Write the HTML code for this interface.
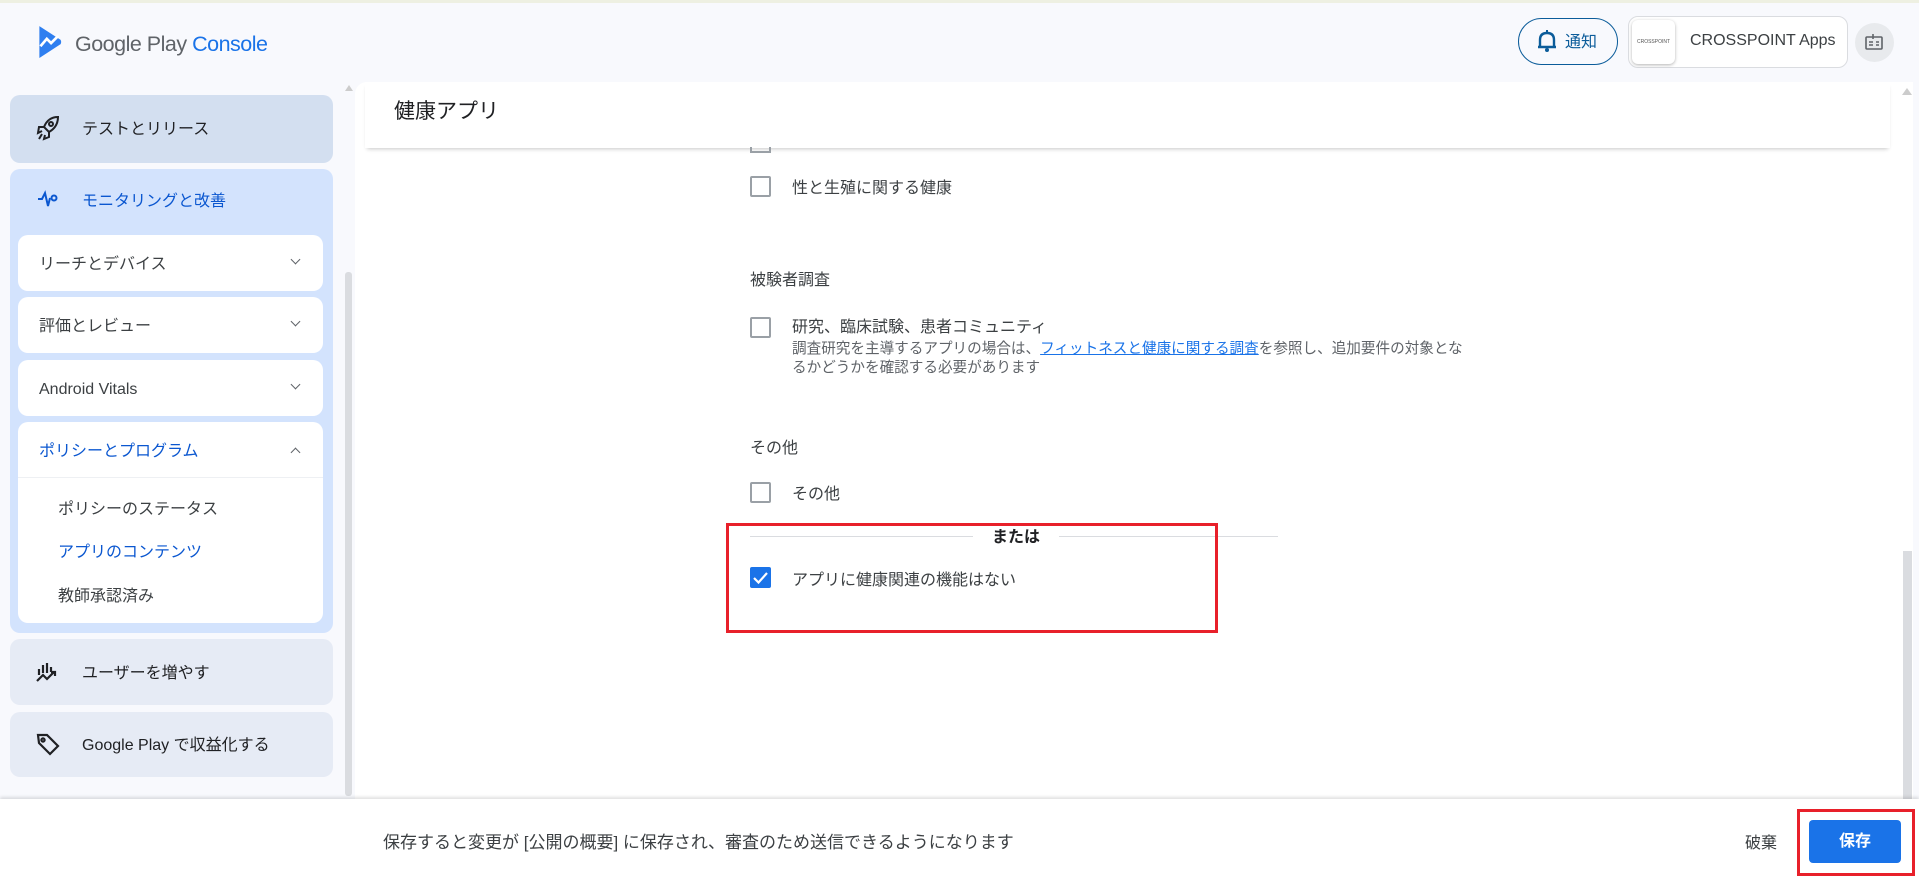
<!DOCTYPE html>
<html><head><meta charset="utf-8"><style>
*{box-sizing:border-box;margin:0;padding:0}
body{width:1919px;height:878px;overflow:hidden;background:#f8f9fd;font-family:"Liberation Sans","Noto Sans CJK JP",sans-serif;color:#202124;position:relative}
.a{position:absolute}
.card{position:absolute;border-radius:10px}
.t{position:absolute;font-size:16px;white-space:nowrap;line-height:1.2;transform:translateY(3px)}
.cb{position:absolute;width:21px;height:21px;border:2px solid #9aa0a6;border-radius:2px;background:#fff}
.sub{position:absolute;left:18px;width:305px;height:56px;background:#fff;border-radius:10px}
.sub span{position:absolute;left:21px;top:20px;font-size:16px;color:#3c4043;line-height:1.2}
.chev{position:absolute;right:24px;top:21px;width:7px;height:7px;border-right:1.6px solid #5f6368;border-bottom:1.6px solid #5f6368;transform:rotate(45deg)}
</style></head><body>
<div class="a" style="left:0;top:0;width:1919px;height:3px;background:#eef0e2"></div>
<svg class="a" style="left:37px;top:25px" width="26" height="34" viewBox="0 0 22 32"><path d="M1 1 L21 14 Q22 16 21 18 L1 31 Z" fill="#2f7ff0"/><path d="M2 20 L8 13 L12 17 L19 10" stroke="#fff" stroke-width="2.5" fill="none"/></svg>
<div class="t" style="left:75px;top:29px;font-size:21.5px;color:#5f6368;letter-spacing:-0.5px">Google Play <span style="color:#1a73e8">Console</span></div>
<div class="a" style="left:1518px;top:18px;width:100px;height:47px;border:1.5px solid #0b5c9a;border-radius:24px"></div>
<svg class="a" style="left:1537px;top:29px" width="20" height="24" viewBox="0 0 20 24"><path d="M3 18 V11 Q3 4 10 4 Q17 4 17 11 V18 Z M1 18 H19" stroke="#0b5c9a" stroke-width="2.4" fill="none"/><circle cx="10" cy="21" r="2" fill="#0b5c9a"/><rect x="9" y="1" width="2" height="3" fill="#0b5c9a"/></svg>
<div class="t" style="left:1565px;top:30px;font-size:16px;color:#0b5c9a">通知</div>
<div class="a" style="left:1628px;top:16px;width:220px;height:52px;border:1px solid #dadce0;border-radius:10px;background:#fff"></div>
<div class="a" style="left:1632px;top:20px;width:43px;height:44px;border-radius:6px;background:#fff;box-shadow:0 1px 3px rgba(0,0,0,.3);font-size:5px;color:#555;text-align:center;line-height:44px">CROSSPOINT</div>
<div class="t" style="left:1690px;top:28px;font-size:16px;color:#3c4043">CROSSPOINT Apps</div>
<div class="a" style="left:1855px;top:23px;width:39px;height:39px;border-radius:50%;background:#e8eaed"></div>
<svg class="a" style="left:1864px;top:31px" width="20" height="20" viewBox="0 0 20 20" fill="none" stroke="#5f6368" stroke-width="1.6"><rect x="2" y="6" width="16" height="12" rx="1"/><path d="M9 3v5M5 11h4M5 14h4M12 11h3M12 14h3"/></svg>
<div class="card" style="left:10px;top:95px;width:323px;height:68px;background:#d3dff0"></div>
<svg class="a" style="left:36px;top:115px" width="24" height="26" viewBox="0 0 24 26" fill="none" stroke="#202124" stroke-width="2"><path d="M22 2 Q12 2 8 12 L13 17 Q22 12 22 2Z"/><circle cx="15" cy="9" r="2"/><path d="M8 12 L3 12 L2 18 L6 16 M13 17 L13 22 L8 24 L9 20 M6 19 L3 24"/></svg>
<div class="t" style="left:82px;top:117px">テストとリリース</div>
<div class="card" style="left:10px;top:169px;width:323px;height:464px;background:#d3e3fd"></div>
<svg class="a" style="left:37px;top:189px" width="22" height="20" viewBox="0 0 20 20" fill="none" stroke="#0b57d0" stroke-width="2"><path d="M0 10 H4 L7 4 L10 17 L12 9"/><circle cx="16" cy="9" r="2.5"/></svg>
<div class="t" style="left:82px;top:189px;color:#0b57d0">モニタリングと改善</div>
<div class="sub" style="top:235px"><span>リーチとデバイス</span><i class="chev"></i></div>
<div class="sub" style="top:297px"><span>評価とレビュー</span><i class="chev"></i></div>
<div class="sub" style="top:360px"><span>Android Vitals</span><i class="chev"></i></div>
<div class="sub" style="top:422px;height:201px"><span style="color:#0b57d0;top:20px">ポリシーとプログラム</span><i class="chev" style="transform:rotate(225deg);top:27px"></i>
<div class="a" style="left:0;top:55px;width:305px;height:1px;background:#eef0f3"></div>
<div class="t" style="left:40px;top:75px;color:#3c4043">ポリシーのステータス</div>
<div class="t" style="left:40px;top:118px;color:#0b57d0">アプリのコンテンツ</div>
<div class="t" style="left:40px;top:162px;color:#3c4043">教師承認済み</div></div>
<div class="card" style="left:10px;top:639px;width:323px;height:66px;background:#e6ebf5"></div>
<svg class="a" style="left:36px;top:661px" width="24" height="22" viewBox="0 0 24 22" fill="none" stroke="#202124" stroke-width="2.2"><path d="M3 14 V8 M7 12 V4 M11 12 V2 M15 11 V6 M1 20 L7 14 L11 18 L18 11 M15 11 H19 V15"/></svg>
<div class="t" style="left:82px;top:661px">ユーザーを増やす</div>
<div class="card" style="left:10px;top:712px;width:323px;height:65px;background:#e6ebf5"></div>
<svg class="a" style="left:36px;top:732px" width="24" height="24" viewBox="0 0 24 24" fill="none" stroke="#202124" stroke-width="2.2"><path d="M2 3 H11 L22 14 L14 22 L3 11 Z"/><circle cx="7" cy="8" r="1.6"/></svg>
<div class="t" style="left:82px;top:733px">Google Play で収益化する</div>
<div class="a" style="left:345px;top:272px;width:7px;height:524px;background:#dadce0;border-radius:3px"></div>
<div class="a" style="left:345px;top:85px;width:0;height:0;border-left:4px solid transparent;border-right:4px solid transparent;border-bottom:6px solid #ccc"></div>
<div class="a" style="left:355px;top:82px;width:1546px;height:718px;background:#fff;border-radius:12px 0 0 0"></div>
<div class="a" style="left:365px;top:82px;width:1525px;height:66px;background:#fff;box-shadow:0 3px 4px -2px rgba(0,0,0,.22)"></div>
<div class="t" style="left:394px;top:96px;font-size:21px">健康アプリ</div>
<div class="a" style="left:750px;top:147px;width:21px;height:6px;border:2px solid #9aa0a6;border-top:none"></div>
<div class="cb" style="left:750px;top:176px"></div>
<div class="t" style="left:792px;top:176px;color:#3c4043">性と生殖に関する健康</div>
<div class="t" style="left:750px;top:268px;color:#3c4043">被験者調査</div>
<div class="cb" style="left:750px;top:317px"></div>
<div class="t" style="left:792px;top:315px;color:#3c4043">研究、臨床試験、患者コミュニティ</div>
<div class="t" style="left:792px;top:337px;font-size:14.6px;color:#5f6368;line-height:19px">調査研究を主導するアプリの場合は、<span style="color:#1a73e8;text-decoration:underline">フィットネスと健康に関する調査</span>を参照し、追加要件の対象とな<br>るかどうかを確認する必要があります</div>
<div class="t" style="left:750px;top:436px;color:#3c4043">その他</div>
<div class="cb" style="left:750px;top:482px"></div>
<div class="t" style="left:792px;top:482px;color:#3c4043">その他</div>
<div class="a" style="left:750px;top:536px;width:528px;height:1px;background:#dadce0"></div>
<div class="a" style="left:973px;top:528px;width:86px;height:20px;background:#fff;text-align:center;font-size:16px;font-weight:bold;line-height:20px">または</div>
<div class="a" style="left:750px;top:567px;width:21px;height:21px;background:#1a73e8;border-radius:2px"></div>
<svg class="a" style="left:750px;top:567px" width="21" height="21"><path d="M4 11 L8.5 15.5 L17 6" stroke="#fff" stroke-width="2.2" fill="none"/></svg>
<div class="t" style="left:792px;top:568px;color:#3c4043">アプリに健康関連の機能はない</div>
<div class="a" style="left:726px;top:523px;width:492px;height:110px;border:3.5px solid #e8202a"></div>
<div class="a" style="left:1901px;top:82px;width:12px;height:718px;background:#fff"></div>
<div class="a" style="left:1903px;top:551px;width:9px;height:248px;background:#dadce0"></div>
<div class="a" style="left:1902px;top:88px;width:0;height:0;border-left:5px solid transparent;border-right:5px solid transparent;border-bottom:7px solid #ccc"></div>
<div class="a" style="left:0;top:799px;width:1919px;height:79px;background:#fff;box-shadow:0 -2px 3px rgba(0,0,0,.12)"></div>
<div class="t" style="left:383px;top:830px;font-size:17px;color:#3c4043">保存すると変更が [公開の概要] に保存され、審査のため送信できるようになります</div>
<div class="t" style="left:1745px;top:831px;color:#3c4043">破棄</div>
<div class="a" style="left:1809px;top:820px;width:92px;height:43px;background:#1a73e8;border-radius:4px;color:#fff;font-weight:bold;font-size:16px;text-align:center;line-height:43px">保存</div>
<div class="a" style="left:1797px;top:809px;width:118px;height:67px;border:3.5px solid #e8202a"></div>
</body></html>
